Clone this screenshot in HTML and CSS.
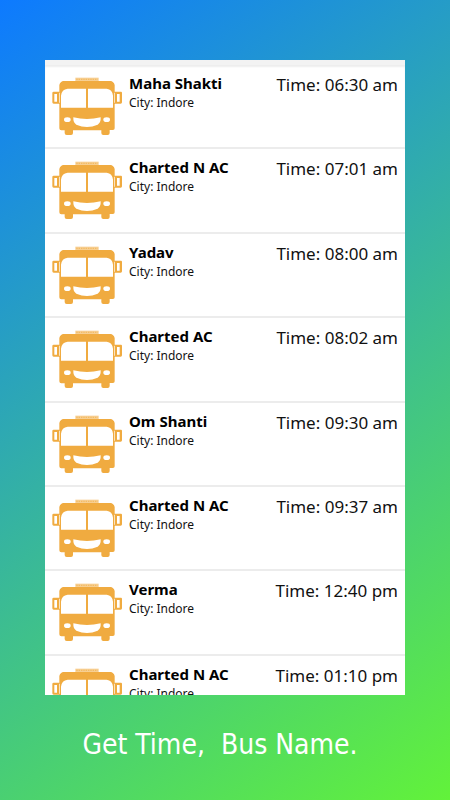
FILE: index.html
```html
<!DOCTYPE html>
<html lang="en">
<head>
<meta charset="utf-8">
<meta name="viewport" content="width=device-width, initial-scale=1">
<title>Bus Times</title>
<link rel="stylesheet" href="styles.css">
</head>
<body>
<svg class="sprite" aria-hidden="true">
  <symbol id="bus" viewBox="21 66 210 177">
    <path fill="#f7cf92" d="M91 68h70v11H91z"/>
    <path stroke="#f0ab40" stroke-width="2" stroke-dasharray="4 3" d="M94 73h64"/>
    <path fill="#f0ab40" d="M56 78H196q10 1 13 12V110H228q3 0 3 4V142q0 4-4 4H209V220q0 5-5 5H194V234q0 6-6 6H175q-6 0-6-6V226H84V234q0 6-6 6H65q-6 0-6-6V226H49q-6 0-6-6V146H26q-4 0-4-4V114q0-4 4-4H43V90q3-11 13-12Z"/>
    <path fill="#fff" d="M68 101H123V158H48V122Q50 103 68 101ZM129 101H185Q202 103 204 122V158H129ZM28 117H36V140H28ZM216 117H224V140H216ZM42 113h2v30h-2zM208 113h2v30h-2z"/>
    <path fill="#fff" d="M85 187Q126 197 167 187Q168 203 158 209Q126 223 94 209Q84 203 85 187Z"/>
    <ellipse cx="67" cy="194" rx="10" ry="7" fill="#fff"/>
    <ellipse cx="185" cy="194" rx="10" ry="7" fill="#fff"/>
  </symbol>
</svg>
<main class="card">
  <ul class="list">
    <li class="row"><svg class="bus" aria-hidden="true"><use href="#bus"/></svg><div class="info"><h2 class="name">Maha Shakti</h2><p class="city">City: Indore</p></div><p class="time">Time: 06:30 am</p></li>
    <li class="row"><svg class="bus" aria-hidden="true"><use href="#bus"/></svg><div class="info"><h2 class="name">Charted N AC</h2><p class="city">City: Indore</p></div><p class="time">Time: 07:01 am</p></li>
    <li class="row"><svg class="bus" aria-hidden="true"><use href="#bus"/></svg><div class="info"><h2 class="name">Yadav</h2><p class="city">City: Indore</p></div><p class="time">Time: 08:00 am</p></li>
    <li class="row"><svg class="bus" aria-hidden="true"><use href="#bus"/></svg><div class="info"><h2 class="name">Charted AC</h2><p class="city">City: Indore</p></div><p class="time">Time: 08:02 am</p></li>
    <li class="row"><svg class="bus" aria-hidden="true"><use href="#bus"/></svg><div class="info"><h2 class="name">Om Shanti</h2><p class="city">City: Indore</p></div><p class="time">Time: 09:30 am</p></li>
    <li class="row"><svg class="bus" aria-hidden="true"><use href="#bus"/></svg><div class="info"><h2 class="name">Charted N AC</h2><p class="city">City: Indore</p></div><p class="time">Time: 09:37 am</p></li>
    <li class="row"><svg class="bus" aria-hidden="true"><use href="#bus"/></svg><div class="info"><h2 class="name">Verma</h2><p class="city">City: Indore</p></div><p class="time">Time: 12:40 pm</p></li>
    <li class="row"><svg class="bus" aria-hidden="true"><use href="#bus"/></svg><div class="info"><h2 class="name">Charted N AC</h2><p class="city">City: Indore</p></div><p class="time">Time: 01:10 pm</p></li>
  </ul>
</main>
<footer class="caption">Get Time,&nbsp; Bus Name.</footer>
</body>
</html>
```

FILE: styles.css
```css
* {
  box-sizing: border-box;
}

body {
  margin: 0;
  height: 100vh;
  padding-top: 60px;
  display: flex;
  flex-direction: column;
  background: linear-gradient(145deg, #0d7aff, #62f23a);
  font-family: "Noto Sans", sans-serif;
  color: #111;
}

h2,
p,
ul {
  margin: 0;
  padding: 0;
}

.sprite {
  position: absolute;
  width: 0;
  height: 0;
}

.card {
  flex: 1;
  min-height: 0;
  margin: 0 10%;
  overflow: hidden;
  background: #fff;
  border-top: 5px solid #f3f3f3;
}

.list {
  display: grid;
  grid-template-rows: repeat(8, 1fr);
  min-height: 675px;
  list-style: none;
}

.row {
  display: flex;
  align-items: flex-start;
  padding: 8px 7px 0;
  border-bottom: 2px solid #ececec;
}

.row:first-child {
  box-shadow: inset 0 2px 2px #eee;
}

.bus {
  flex: none;
  width: 70px;
  height: 59px;
  margin-top: 4px;
}

.info {
  flex: 1;
  margin-left: 7px;
}

.name {
  font-size: 15px;
  line-height: 20px;
  font-weight: 700;
  color: #000;
}

.city {
  font-size: 12px;
  line-height: 20px;
}

.time {
  font-size: 17px;
  line-height: 24px;
}

.caption {
  height: 105px;
  padding-right: 10px;
  text-align: center;
  font-family: "DejaVu Sans Condensed", "Noto Sans", sans-serif;
  font-size: 28px;
  line-height: 100px;
  color: #fff;
}
```
